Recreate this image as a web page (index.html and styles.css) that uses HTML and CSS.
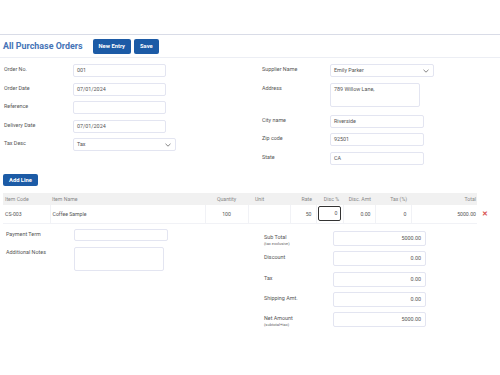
FILE: index.html
```html
<!DOCTYPE html>
<html lang="en">
<head>
    <meta charset="UTF-8">
    <meta name="viewport" content="width=device-width, initial-scale=1.0">
    <title>All Purchase Orders</title>
    <link rel="stylesheet" href="styles.css">
</head>
<body>
    <div class="topbar"></div>

    <header class="page-head">
        <h1>All Purchase Orders</h1>
        <button class="btn">New Entry</button>
        <button class="btn">Save</button>
    </header>

    <main class="content">
        <section class="details">
            <div class="details-left">
                <label>Order No.</label>
                <div class="field w93">001</div>

                <label>Order Date</label>
                <div class="field w93">07/01/2024</div>

                <label>Reference</label>
                <div class="field w93"></div>

                <label>Delivery Date</label>
                <div class="field w93">07/01/2024</div>

                <label>Tax Desc</label>
                <div class="field select w103">
                    <span>Tax</span>
                    <svg width="6" height="4" viewBox="0 0 6 4"><path d="M0.5 0.8 L3 3.2 L5.5 0.8" fill="none" stroke="#666" stroke-width="0.8"/></svg>
                </div>
            </div>

            <div class="details-right">
                <label>Supplier Name</label>
                <div class="field select w104">
                    <span>Emily Parker</span>
                    <svg width="6" height="4" viewBox="0 0 6 4"><path d="M0.5 0.8 L3 3.2 L5.5 0.8" fill="none" stroke="#666" stroke-width="0.8"/></svg>
                </div>

                <label>Address</label>
                <div class="field area w90">789 Willow Lane,</div>

                <label>City name</label>
                <div class="field w94">Riverside</div>

                <label>Zip code</label>
                <div class="field w94">92501</div>

                <label>State</label>
                <div class="field w94">CA</div>
            </div>
        </section>

        <button class="btn add-line">Add Line</button>

        <div class="lines">
            <table class="line-table">
                <colgroup>
                    <col style="width: 47px">
                    <col style="width: 155px">
                    <col style="width: 43px">
                    <col style="width: 42px">
                    <col style="width: 26px">
                    <col style="width: 27px">
                    <col style="width: 32px">
                    <col style="width: 36px">
                    <col style="width: 66px">
                </colgroup>
                <thead>
                    <tr>
                        <th>Item Code</th>
                        <th>Item Name</th>
                        <th class="center">Quantity</th>
                        <th class="unit">Unit</th>
                        <th class="right">Rate</th>
                        <th class="right">Disc %</th>
                        <th class="right">Disc. Amt</th>
                        <th class="right">Tax (%)</th>
                        <th class="right">Total</th>
                    </tr>
                </thead>
                <tbody>
                    <tr>
                        <td>CS-003</td>
                        <td>Coffee Sample</td>
                        <td class="center">100</td>
                        <td></td>
                        <td class="right">50</td>
                        <td class="disc"><div class="disc-input">0</div></td>
                        <td class="right">0.00</td>
                        <td class="right">0</td>
                        <td class="right">5000.00</td>
                    </tr>
                </tbody>
            </table>
            <span class="remove">&#x2715;</span>
        </div>

        <section class="summary">
            <div class="summary-left">
                <label>Payment Term</label>
                <div class="field w94"></div>

                <label>Additional Notes</label>
                <div class="field area w90"></div>
            </div>

            <div class="summary-right">
                <label>Sub Total<small>(tax exclusive)</small></label>
                <div class="field amount">5000.00</div>

                <label>Discount</label>
                <div class="field amount">0.00</div>

                <label>Tax</label>
                <div class="field amount">0.00</div>

                <label>Shipping Amt.</label>
                <div class="field amount">0.00</div>

                <label>Net Amount<small>(subtotal+tax)</small></label>
                <div class="field amount">5000.00</div>
            </div>
        </section>
    </main>
</body>
</html>
```

FILE: styles.css
```css
* {
    box-sizing: border-box;
    margin: 0;
    padding: 0;
}

body {
    font-family: Roboto, "Liberation Sans", Arial, sans-serif;
    background-color: #fff;
    color: #555;
    width: 500px;
    height: 375px;
    overflow: hidden;
}

.topbar {
    height: 35px;
    border-bottom: 1px solid #d9dce7;
}

.page-head {
    height: 23px;
    display: flex;
    align-items: center;
    padding-left: 3px;
    border-bottom: 1px solid #eceef4;
}

h1 {
    font-size: 8.9px;
    font-weight: bold;
    color: #4473b6;
    margin-right: 10px;
}

.btn {
    background-color: #1c5ba6;
    color: #fff;
    border: none;
    border-radius: 2px;
    font-family: inherit;
    font-size: 5.8px;
    font-weight: bold;
    height: 15px;
    padding: 0 6px;
    margin-right: 3px;
}

.content {
    padding-top: 6px;
}

.details {
    display: flex;
}

label {
    font-size: 5.4px;
    line-height: 7px;
    padding-top: 2px;
    color: #555;
}

label small {
    display: block;
    font-size: 4px;
    line-height: 5px;
    color: #666;
}

.field {
    height: 13px;
    border: 1px solid #e3e5f1;
    border-radius: 2px;
    font-size: 5.4px;
    line-height: 11px;
    padding: 0 3px;
    color: #555;
}

.field.select {
    display: flex;
    align-items: center;
    justify-content: space-between;
    padding-right: 4px;
}

.field.area {
    height: 24px;
    line-height: 9px;
    padding-top: 1px;
}

.w90 { width: 90px; }
.w93 { width: 93px; }
.w94 { width: 94px; }
.w103 { width: 103px; }
.w104 { width: 104px; }

.details-left {
    width: 262px;
    padding-left: 4px;
    display: grid;
    grid-template-columns: 69px auto;
    row-gap: 5.5px;
    align-content: start;
    justify-items: start;
}

.details-right {
    display: grid;
    grid-template-columns: 68px auto;
    row-gap: 5.5px;
    align-content: start;
    justify-items: start;
}

.details-right .area {
    margin-bottom: 2.5px;
}

.add-line {
    margin: 9px 0 0 3px;
    height: 12px;
    padding: 0 6px;
    display: block;
}

.lines {
    display: flex;
    align-items: flex-end;
    margin-top: 7px;
    padding-left: 3px;
}

.line-table {
    width: 474px;
    table-layout: fixed;
    border-collapse: collapse;
    font-size: 5.2px;
}

.line-table th {
    background-color: #f1f1f1;
    font-weight: normal;
    color: #888;
    height: 12px;
    text-align: left;
    padding: 0 2px;
}

.line-table td {
    height: 19px;
    padding: 0 2px;
    color: #555;
    border-right: 1px solid #f1f2f6;
    border-bottom: 1px solid #f1f2f6;
}

.line-table td:last-child {
    border-right: none;
}

.line-table .center {
    text-align: center;
}

.line-table .right {
    text-align: right;
    padding-right: 4px;
}

.line-table th:last-child,
.line-table td:last-child {
    padding-right: 1px;
}

.line-table .unit {
    padding-left: 7px;
}

.line-table .disc {
    padding: 0 2px 0 1px;
}

.disc-input {
    height: 15px;
    border: 1px solid #333;
    border-radius: 2px;
    text-align: right;
    line-height: 13px;
    padding-right: 2px;
}

.remove {
    color: #d9534f;
    font-size: 6.5px;
    font-weight: bold;
    line-height: 8px;
    margin-left: 5px;
    margin-bottom: 6px;
}

.summary {
    display: flex;
}

.summary-left {
    width: 264px;
    padding: 5px 0 0 6px;
    display: grid;
    grid-template-columns: 68px auto;
    row-gap: 6px;
    align-content: start;
    justify-items: start;
}

.summary-left .field {
    height: 12px;
}

.summary-left .area {
    height: 24px;
}

.summary-right {
    padding-top: 7px;
    display: grid;
    grid-template-columns: 69px 93px;
    row-gap: 5.3px;
    align-content: start;
}

.summary-right label {
    padding-top: 3px;
}

.field.amount {
    height: 15px;
    line-height: 13px;
    text-align: right;
    padding-right: 4px;
}
```
